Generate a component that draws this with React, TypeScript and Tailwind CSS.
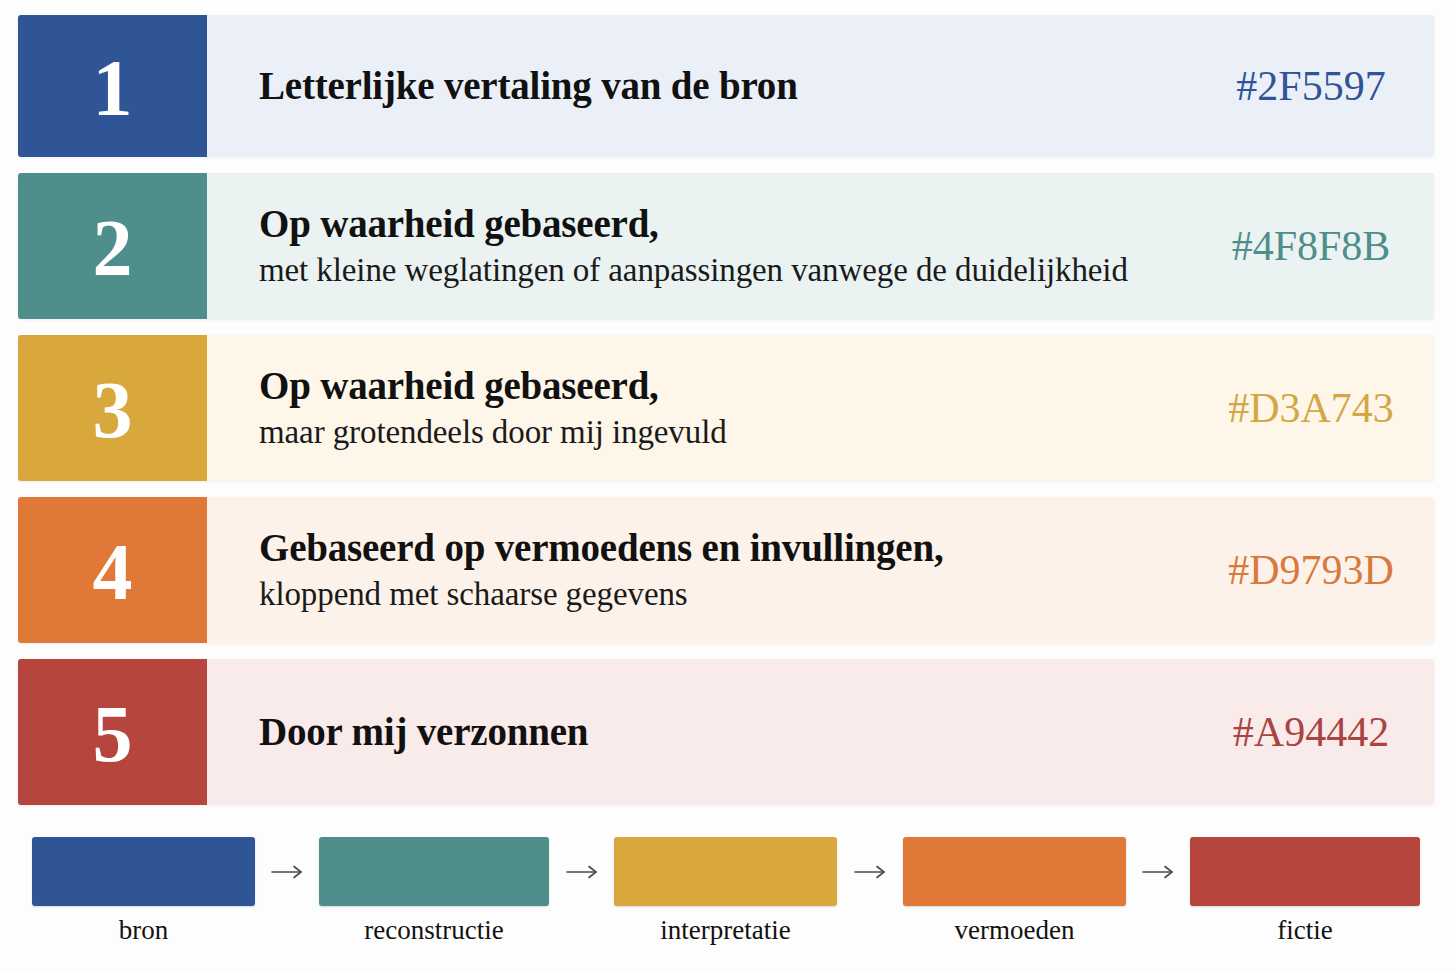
import { FC } from 'react';

interface Level {
  num: string;
  title: string;
  sub?: string;
  hex: string;
  box: string;
  bg: string;
  text: string;
  h: string;
}

const levels: Level[] = [
  { num: '1', title: 'Letterlijke vertaling van de bron', hex: '#2F5597', box: 'bg-[#2F5597]', bg: 'bg-[#EBF0F8]', text: 'text-[#2F5597]', h: 'h-[142px]' },
  { num: '2', title: 'Op waarheid gebaseerd,', sub: 'met kleine weglatingen of aanpassingen vanwege de duidelijkheid', hex: '#4F8F8B', box: 'bg-[#4F8F8B]', bg: 'bg-[#EAF3F2]', text: 'text-[#4F8F8B]', h: 'h-[146px]' },
  { num: '3', title: 'Op waarheid gebaseerd,', sub: 'maar grotendeels door mij ingevuld', hex: '#D3A743', box: 'bg-[#D9A83C]', bg: 'bg-[#FDF6E9]', text: 'text-[#D3A743]', h: 'h-[146px]' },
  { num: '4', title: 'Gebaseerd op vermoedens en invullingen,', sub: 'kloppend met schaarse gegevens', hex: '#D9793D', box: 'bg-[#E07838]', bg: 'bg-[#FDF2EA]', text: 'text-[#D9793D]', h: 'h-[146px]' },
  { num: '5', title: 'Door mij verzonnen', hex: '#A94442', box: 'bg-[#B6453D]', bg: 'bg-[#F9EBEA]', text: 'text-[#A94442]', h: 'h-[146px]' },
];

const scale = [
  { label: 'bron', box: 'bg-[#2F5597]', w: 'w-[223px]', gap: '' },
  { label: 'reconstructie', box: 'bg-[#4F8F8B]', w: 'w-[230px]', gap: 'w-[64px]' },
  { label: 'interpretatie', box: 'bg-[#D9A83C]', w: 'w-[223px]', gap: 'w-[65px]' },
  { label: 'vermoeden', box: 'bg-[#E07838]', w: 'w-[223px]', gap: 'w-[66px]' },
  { label: 'fictie', box: 'bg-[#B6453D]', w: 'w-[230px]', gap: 'w-[64px]' },
];

const Arrow = () => (
  <svg width="32" height="14" viewBox="0 0 32 14" fill="none" stroke="#4a4a4a" strokeWidth="1.6" strokeLinecap="round" strokeLinejoin="round">
    <path d="M1 7h29" />
    <path d="M23 1.5l7 5.5-7 5.5" />
  </svg>
);

const Row: FC<{ level: Level }> = ({ level }) => (
  <div className={`flex rounded-[3px] overflow-hidden shadow-[0_1px_3px_rgba(0,0,0,0.06)] ${level.h} ${level.bg}`}>
    <div className={`w-[189px] shrink-0 flex items-center justify-center text-white text-[80px] font-bold leading-none pt-[4px] ${level.box}`}>
      {level.num}
    </div>
    <div className="flex-1 flex flex-col justify-center pl-[52px] text-[#111]">
      <div className="font-bold text-[39px] leading-[48px] tracking-[-0.2px]">{level.title}</div>
      {level.sub && <div className="text-[33px] leading-[44px] text-[#1a1a1a] tracking-[-0.1px]">{level.sub}</div>}
    </div>
    <div className={`w-[170px] mr-[38px] shrink-0 flex items-center justify-center text-[42px] ${level.text}`}>
      {level.hex}
    </div>
  </div>
);

export default function App() {
  return (
    <div className="w-[1456px] h-[971px] bg-[#FDFDFD] font-['Liberation_Serif',serif] overflow-hidden">
      <div className="flex flex-col gap-[16px] pl-[18px] pr-[22px] pt-[15px]">
        {levels.map((l) => (
          <Row key={l.num} level={l} />
        ))}
      </div>
      <div className="flex items-start pl-[32px] pt-[32px]">
        {scale.map((s) => (
          <div key={s.label} className="flex items-start">
            {s.gap && (
              <div className={`h-[69px] flex items-center justify-center ${s.gap}`}>
                <Arrow />
              </div>
            )}
            <div className="flex flex-col items-center">
              <div className={`h-[69px] rounded-[3px] shadow-[0_1px_2px_rgba(0,0,0,0.15)] ${s.w} ${s.box}`} />
              <div className="mt-[6px] text-[27px] leading-[36px] text-[#111]">{s.label}</div>
            </div>
          </div>
        ))}
      </div>
    </div>
  );
}
